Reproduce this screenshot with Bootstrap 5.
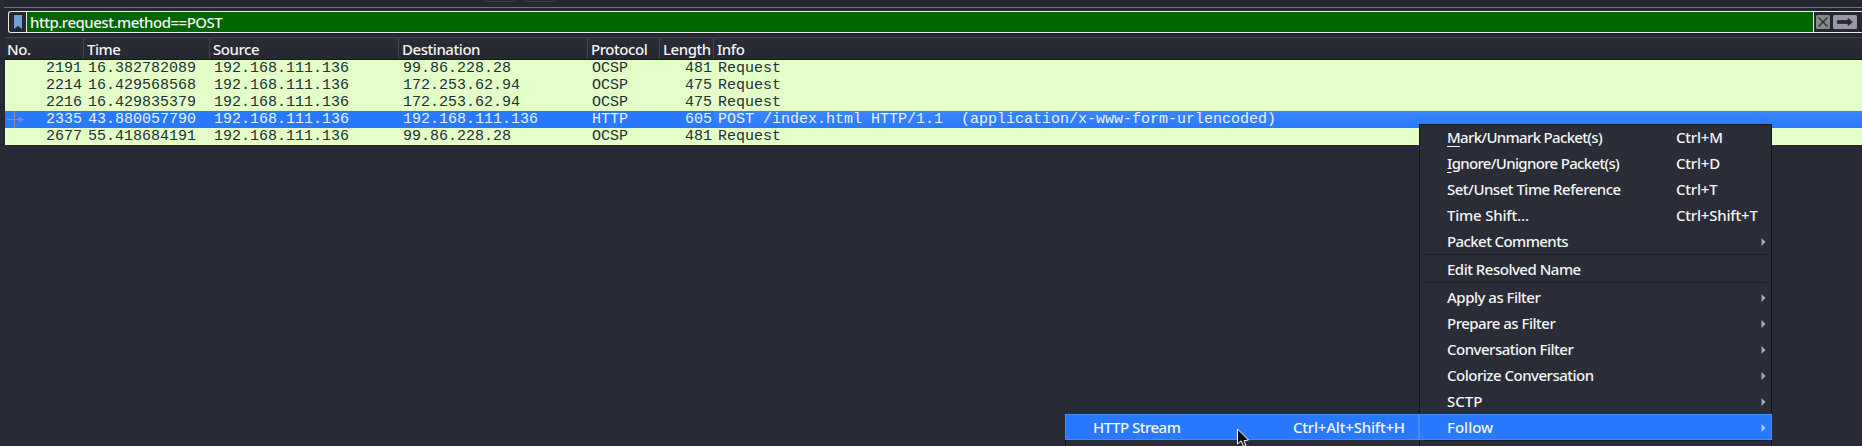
<!DOCTYPE html>
<html lang="en">
<head>
<meta charset="utf-8">
<title>Packet list</title>
<link href="https://cdn.jsdelivr.net/npm/bootstrap@5.3.0/dist/css/bootstrap.min.css" rel="stylesheet">
<style>
html,body{height:446px;overflow:hidden}
body{background:#272a34;color:#f4f4f5;font:500 15px/20px "Noto Sans",sans-serif}
.toolstrip{height:7px;margin-left:4px;background:#23262f;padding-left:481px;gap:10px}
.toolstrip i{width:30px;height:2px;border:1px solid #3e414b;border-top:0;border-radius:0 0 3px 3px}
.filter-wrap{border-top:1px solid #6f717a;margin-left:4px;padding:3px 0 0 4px;height:29px;background:#252831}
.filter-bar{height:22px;border:1px solid #ece9e4;border-right:0;border-radius:3px 0 0 3px}
.bm{width:18px;border-right:1px solid #ece9e4}
.expr{background:#006400;border-right:1px solid #ece9e4;padding-left:3px;line-height:20px;letter-spacing:-.49px}
.tools{width:48px;padding-left:2px;gap:3px}
.gridrow{display:grid;grid-template-columns:79px 126px 189px 189px 72px 54px 1fr;margin-left:5px;white-space:pre}
.head{height:23px;margin-top:1px;border-top:1px solid #42454f;border-bottom:1px solid #16181e;background:linear-gradient(#2a2d36,#252830);line-height:23px;letter-spacing:-.45px}
.head>div{height:21px;padding-left:3px;border-right:1px solid #42454f}
.head>div:first-child{padding-left:2px}
.head>div:last-child{border:0}
.pkt{height:17px;line-height:18px;font-family:"Liberation Mono",monospace;font-weight:400;background:#e4ffc7;color:#21303a}
.pkt>div{height:17px;padding-left:4px}
.pkt>.num{padding:0 2px 0 0;text-align:right}
.pkt.active{background:#2979ff;color:#e8f0ff}
.pkt.active>div:last-child{background:linear-gradient(#3a85ff,#2979ff)}
.ctx{left:1419px;top:124px;width:353px;height:322px;background:#2a2c37;box-shadow:inset 1px 1px #15171f,inset -1px 0 #15171f}
.item{height:26px;padding-left:28px;line-height:26px;white-space:nowrap;letter-spacing:-.5px}
.key{width:96px;letter-spacing:-.2px}
.item svg{margin-right:6px;margin-top:1px}
.tight{letter-spacing:-.68px}
.mid{letter-spacing:-.59px}
.loose{letter-spacing:-.2px}
.plain{letter-spacing:0}
.rule{height:2px;margin:0 5px;border-top:1px solid #1e2029}
.on{background:#2979ff;border:1px solid #4a8bf5;line-height:24px;padding-left:27px}
.on svg{margin-right:5px}
.sub{left:1065px;top:414px;width:354px;height:32px;background:#2a2c37;box-shadow:inset 1px 0 #15171f}
.sub .key{width:125px}
.pointer{left:1236px;top:428px}
u{text-underline-offset:3px;text-decoration-thickness:1px;text-decoration-skip-ink:none}
</style>
<script src="https://cdn.jsdelivr.net/npm/bootstrap@5.3.0/dist/js/bootstrap.bundle.min.js"></script>
</head>
<body class="position-relative">
<div class="toolstrip d-flex"><i></i><i></i></div>
<div class="filter-wrap">
 <div class="filter-bar d-flex">
  <div class="bm d-flex align-items-center justify-content-center"><svg width="10" height="16"><path d="M1 1h8v14L5 12 1 15z" fill="#729fcf"/></svg></div>
  <div class="expr flex-grow-1">http.request.method==POST</div>
  <div class="tools d-flex align-items-center"><svg width="14" height="14"><rect width="14" height="14" rx="1.5" fill="#888a85"/><path d="M2.500 2.500l9 9m0-9l-9 9" stroke="#2b2e38" stroke-width="1.3"/></svg><svg width="24" height="14"><rect width="24" height="14" rx="1.5" fill="#9999a6"/><path d="M4.500 5.500h10.500V3.500l4.500 3.500-4.500 3.500V8.500H4.500z" fill="#272a34" stroke="#272a34" stroke-width=".8" stroke-linejoin="round"/></svg></div>
 </div>
</div>
<div class="gridrow head"><div>No.</div><div>Time</div><div>Source</div><div>Destination</div><div>Protocol</div><div>Length</div><div>Info</div></div>
<div class="gridrow pkt"><div class="num">2191</div><div>16.382782089</div><div>192.168.111.136</div><div>99.86.228.28</div><div>OCSP</div><div class="num">481</div><div>Request</div></div>
<div class="gridrow pkt"><div class="num">2214</div><div>16.429568568</div><div>192.168.111.136</div><div>172.253.62.94</div><div>OCSP</div><div class="num">475</div><div>Request</div></div>
<div class="gridrow pkt"><div class="num">2216</div><div>16.429835379</div><div>192.168.111.136</div><div>172.253.62.94</div><div>OCSP</div><div class="num">475</div><div>Request</div></div>
<div class="gridrow pkt active"><div class="num d-flex justify-content-between"><svg width="22" height="17"><path d="M2 8.500h13M9.500 0v17" stroke="#8b909c" fill="none"/><path d="M14 5.500l5 3-5 3z" fill="#8b909c"/></svg>2335</div><div>43.880057790</div><div>192.168.111.136</div><div>192.168.111.136</div><div>HTTP</div><div class="num">605</div><div>POST /index.html HTTP/1.1  (application/x-www-form-urlencoded)</div></div>
<div class="gridrow pkt"><div class="num">2677</div><div>55.418684191</div><div>192.168.111.136</div><div>99.86.228.28</div><div>OCSP</div><div class="num">481</div><div>Request</div></div>

<div class="ctx position-absolute">
 <div class="item d-flex"><span class="flex-grow-1 tight"><u>M</u>ark/Unmark Packet(s)</span><span class="key">Ctrl+M</span></div>
 <div class="item d-flex"><span class="flex-grow-1 tight"><u>I</u>gnore/Unignore Packet(s)</span><span class="key">Ctrl+D</span></div>
 <div class="item d-flex"><span class="flex-grow-1">Set/Unset Time Reference</span><span class="key">Ctrl+T</span></div>
 <div class="item d-flex"><span class="flex-grow-1 loose">Time Shift…</span><span class="key">Ctrl+Shift+T</span></div>
 <div class="item mid d-flex align-items-center justify-content-between">Packet Comments<svg width="5" height="8"><path d="M.5 0L4.500 4 .5 8z" fill="#a9abb0"/></svg></div>
 <div class="rule"></div>
 <div class="item">Edit Resolved Name</div>
 <div class="rule"></div>
 <div class="item d-flex align-items-center justify-content-between">Apply as Filter<svg width="5" height="8"><path d="M.5 0L4.500 4 .5 8z" fill="#a9abb0"/></svg></div>
 <div class="item d-flex align-items-center justify-content-between">Prepare as Filter<svg width="5" height="8"><path d="M.5 0L4.500 4 .5 8z" fill="#a9abb0"/></svg></div>
 <div class="item d-flex align-items-center justify-content-between">Conversation Filter<svg width="5" height="8"><path d="M.5 0L4.500 4 .5 8z" fill="#a9abb0"/></svg></div>
 <div class="item d-flex align-items-center justify-content-between">Colorize Conversation<svg width="5" height="8"><path d="M.5 0L4.500 4 .5 8z" fill="#a9abb0"/></svg></div>
 <div class="item plain d-flex align-items-center justify-content-between">SCTP<svg width="5" height="8"><path d="M.5 0L4.500 4 .5 8z" fill="#a9abb0"/></svg></div>
 <div class="item on plain d-flex align-items-center justify-content-between">Follow<svg width="5" height="8"><path d="M.5 0L4.500 4 .5 8z" fill="#a9c8ff"/></svg></div>
 <div class="rule"></div>
</div>
<div class="sub position-absolute">
 <div class="item on d-flex"><span class="flex-grow-1">HTTP Stream</span><span class="key">Ctrl+Alt+Shift+H</span></div>
</div>
<svg class="pointer position-absolute" width="14" height="18"><path d="M1.500 1v15l3.600-3.200L7.500 18h2.500l-2-5.200 4.500-.8z" fill="#0a0a0a" stroke="#fff"/></svg>
</body>
</html>
